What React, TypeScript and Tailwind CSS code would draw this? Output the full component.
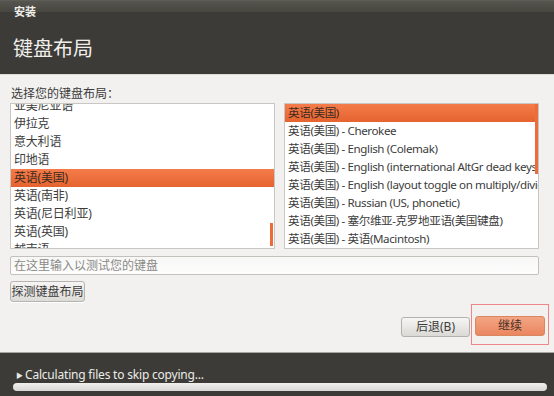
import React from 'react';

const font = { fontFamily: '"Noto Sans", "Noto Sans CJK SC", sans-serif' };

const leftItems = [
  '亚美尼亚语',
  '伊拉克',
  '意大利语',
  '印地语',
  '英语(美国)',
  '英语(南非)',
  '英语(尼日利亚)',
  '英语(英国)',
  '越南语',
];

const rightItems = [
  '英语(美国)',
  '英语(美国) - Cherokee',
  '英语(美国) - English (Colemak)',
  '英语(美国) - English (international AltGr dead keys)',
  '英语(美国) - English (layout toggle on multiply/divide key)',
  '英语(美国) - Russian (US, phonetic)',
  '英语(美国) - 塞尔维亚-克罗地亚语(美国键盘)',
  '英语(美国) - 英语(Macintosh)',
];

function Row({ label, selected, narrow }: { label: string; selected?: boolean; narrow?: boolean }) {
  return (
    <div
      className={`h-[18px] leading-[18px] pl-[3px] whitespace-nowrap ${
        narrow ? 'text-[11.6px] tracking-[-0.4px]' : 'text-[12px] tracking-[-0.2px]'
      } ${selected ? 'bg-gradient-to-b from-[#f47c4a] to-[#e5632f] text-[#3c2a20]' : 'text-[#3c3c3c]'}`}
    >
      {label}
    </div>
  );
}

export default function App() {
  return (
    <div className="w-[554px] h-[396px] flex flex-col bg-[#f2f1f0] overflow-hidden" style={font}>
      {/* Header */}
      <div className="h-[74px] bg-[#3c3b37] flex flex-col">
        <div className="h-[12px] bg-gradient-to-b from-[#56554f] to-[#47463f] border-t border-[#5e5d57]" />
        <div className="text-[11px] font-bold text-[#f0efec] pl-[14px] -mt-[7px] leading-[14px]">安装</div>
        <div className="text-[20px] text-[#f0efec] pl-[13px] mt-[18px] leading-[24px]">键盘布局</div>
      </div>
      <div className="h-px bg-[#dddbd7]" />

      {/* Content */}
      <div className="flex-1 flex flex-col px-[10px] pt-[11px]">
        <div className="text-[12px] text-[#3c3c3c] leading-[16px] pl-px">选择您的键盘布局：</div>
        <div className="flex gap-[9px] mt-px pr-[5px]">
          <div className="relative w-[265px] h-[146px] bg-white border border-[#c9c7c3] overflow-hidden">
            <div className="-mt-[7px]">
              {leftItems.map((it) => (
                <Row key={it} label={it} selected={it === '英语(美国)'} />
              ))}
            </div>
            <div className="absolute right-px top-[119px] w-[3px] h-[23px] bg-[#ec6c3a]" />
          </div>
          <div className="relative flex-1 h-[146px] bg-white border border-[#c9c7c3] overflow-hidden">
            <div>
              {rightItems.map((it, i) => (
                <Row key={it} label={it} selected={i === 0} narrow />
              ))}
            </div>
            <div className="absolute right-0 top-0 w-[3px] h-[70px] bg-[#ec6c3a]" />
          </div>
        </div>

        <div className="mt-[7px] mr-[5px] h-[19px] bg-gradient-to-b from-[#f7f7f6] to-[#fdfdfd] border border-[#c3c1bd] rounded-[2px] text-[12px] leading-[17px] text-[#8a8986] pl-[3px]">
          在这里输入以测试您的键盘
        </div>

        <div className="mt-[6px] w-[75px] h-[21px] bg-gradient-to-b from-[#f6f5f3] to-[#dddbd8] border border-[#b6b4b0] rounded-[3px] text-[12px] leading-[19px] text-[#3c3c3c] text-center shadow-[0_1px_0_#ffffff]">
          探测键盘布局
        </div>

        <div className="flex justify-end items-start mt-[2px] mr-[-5px]">
          <div className="mt-[13px] w-[69px] h-[20px] bg-gradient-to-b from-[#f7f6f4] to-[#dbd9d5] border border-[#b3b1ad] rounded-[3px] text-[12px] leading-[18px] text-[#3c3c3c] text-center">
            后退(B)
          </div>
          <div className="ml-px w-[78px] h-[41px] border-[1.5px] border-[#ee8588] flex justify-center pt-[11px]">
            <div className="w-[70px] h-[20px] bg-gradient-to-b from-[#f3a583] to-[#ea8660] border border-[#d8875f] rounded-[3px] text-[12px] leading-[18px] text-[#4a3026] text-center">
              继续
            </div>
          </div>
        </div>
      </div>

      {/* Bottom status bar */}
      <div className="h-[44px] bg-[#3c3b37] border-t border-[#a7a6a2] flex flex-col px-[13px]">
        <div className="mt-[15px] flex items-center h-[14px]">
          <span className="text-[7px] text-[#e8e7e3] leading-none ml-[3px] mr-[2px]">▶</span>
          <span className="text-[12px] text-[#ecebe8] leading-[14px] tracking-[-0.2px]">Calculating files to skip copying...</span>
        </div>
        <div className="mt-px mr-[-6px] h-[8px] rounded-full bg-gradient-to-b from-[#f0efed] to-[#d8d7d4]" />
      </div>
    </div>
  );
}
